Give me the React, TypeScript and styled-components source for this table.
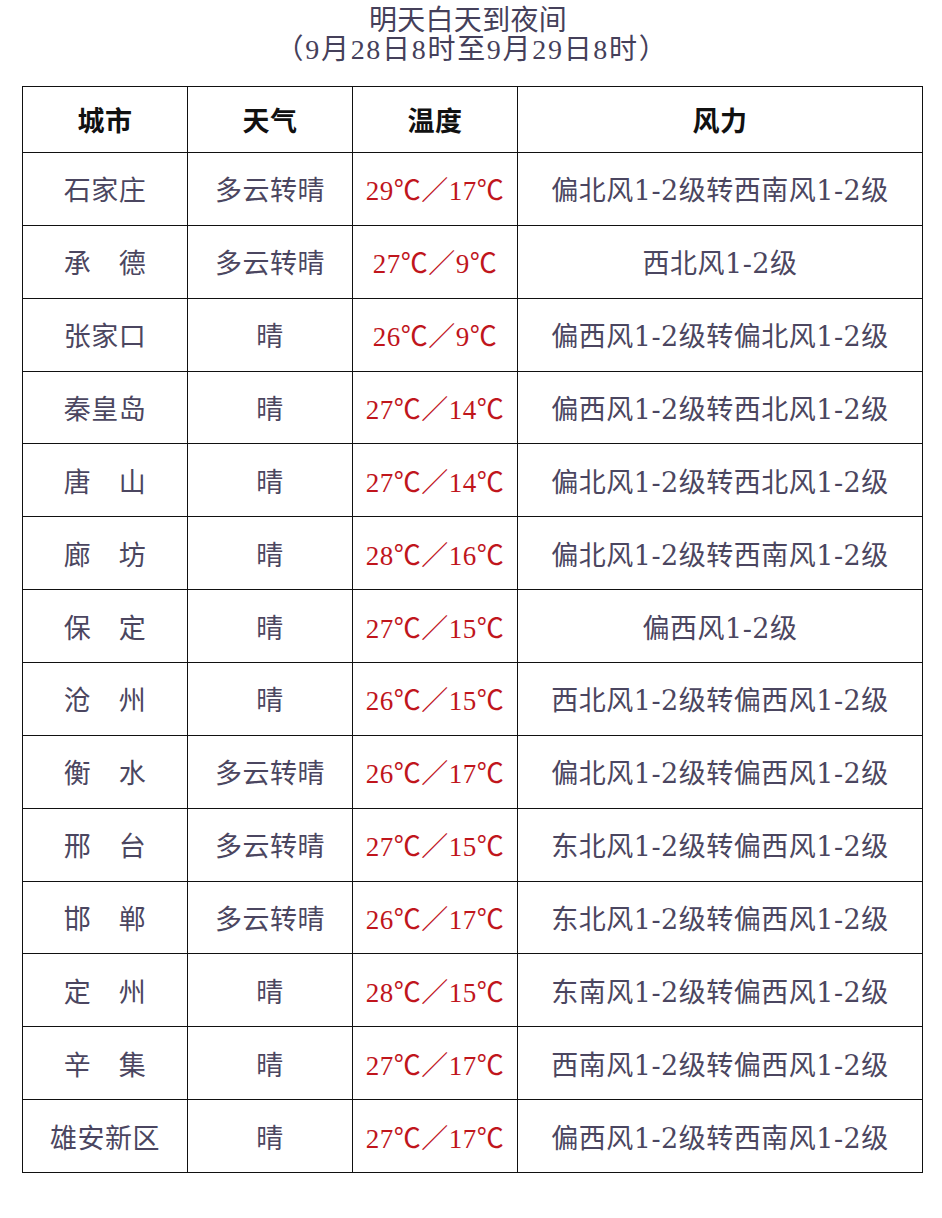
import React from "react";
import styled, { createGlobalStyle } from "styled-components";

const Global = createGlobalStyle`
  html, body { margin: 0; padding: 0; background: #ffffff; }
  body { font-family: "Liberation Serif", "Noto Sans CJK SC", serif; }
`;

const Page = styled.div`
  width: 942px;
  height: 1218px;
  box-sizing: border-box;
  padding: 6px 20px 0 22px;
  display: flex;
  flex-direction: column;
`;

const Title = styled.div`
  display: flex;
  flex-direction: column;
  align-items: center;
  color: #45405a;
  font-size: 28px;
  line-height: 29px;
`;

const TitleLine = styled.div<{ $spacing?: number; $shift?: number }>`
  letter-spacing: ${(p) => p.$spacing ?? 0.3}px;
  margin-left: ${(p) => p.$shift ?? 0}px;
  white-space: pre;
`;

const Table = styled.div`
  margin-top: 22px;
  width: 900px;
  display: grid;
  grid-template-columns: 165px 165px 165px 405px;
  grid-template-rows: 66px;
  grid-auto-rows: 72.86px;
  border-top: 1.5px solid #111;
  border-left: 1.5px solid #111;
`;

const Cell = styled.div<{ $head?: boolean; $red?: boolean; $wind?: boolean }>`
  display: flex;
  align-items: center;
  justify-content: center;
  border-right: 1.5px solid #111;
  border-bottom: 1.5px solid #111;
  font-size: 27px;
  letter-spacing: 0.5px;
  white-space: pre;
  font-family: ${(p) =>
    p.$wind
      ? `"DejaVu Serif", "Noto Sans CJK SC", serif`
      : `"Liberation Serif", "Noto Sans CJK SC", serif`};
  color: ${(p) => (p.$head ? "#111" : p.$red ? "#c0151c" : "#4b4660")};
  font-weight: ${(p) => (p.$head ? 700 : 400)};
`;

const rows: [string, string, string, string][] = [
  ["石家庄", "多云转晴", "29℃／17℃", "偏北风1-2级转西南风1-2级"],
  ["承　德", "多云转晴", "27℃／9℃", "西北风1-2级"],
  ["张家口", "晴", "26℃／9℃", "偏西风1-2级转偏北风1-2级"],
  ["秦皇岛", "晴", "27℃／14℃", "偏西风1-2级转西北风1-2级"],
  ["唐　山", "晴", "27℃／14℃", "偏北风1-2级转西北风1-2级"],
  ["廊　坊", "晴", "28℃／16℃", "偏北风1-2级转西南风1-2级"],
  ["保　定", "晴", "27℃／15℃", "偏西风1-2级"],
  ["沧　州", "晴", "26℃／15℃", "西北风1-2级转偏西风1-2级"],
  ["衡　水", "多云转晴", "26℃／17℃", "偏北风1-2级转偏西风1-2级"],
  ["邢　台", "多云转晴", "27℃／15℃", "东北风1-2级转偏西风1-2级"],
  ["邯　郸", "多云转晴", "26℃／17℃", "东北风1-2级转偏西风1-2级"],
  ["定　州", "晴", "28℃／15℃", "东南风1-2级转偏西风1-2级"],
  ["辛　集", "晴", "27℃／17℃", "西南风1-2级转偏西风1-2级"],
  ["雄安新区", "晴", "27℃／17℃", "偏西风1-2级转西南风1-2级"],
];

export default function App() {
  return (
    <>
      <Global />
      <Page>
        <Title>
          <TitleLine $shift={-8}>明天白天到夜间</TitleLine>
          <TitleLine $spacing={1.7}>（9月28日8时至9月29日8时）</TitleLine>
        </Title>
        <Table>
          <Cell $head>城市</Cell>
          <Cell $head>天气</Cell>
          <Cell $head>温度</Cell>
          <Cell $head>风力</Cell>
          {rows.map((r, i) => (
            <React.Fragment key={i}>
              <Cell>{r[0]}</Cell>
              <Cell>{r[1]}</Cell>
              <Cell $red>{r[2]}</Cell>
              <Cell $wind>{r[3]}</Cell>
            </React.Fragment>
          ))}
        </Table>
      </Page>
    </>
  );
}
